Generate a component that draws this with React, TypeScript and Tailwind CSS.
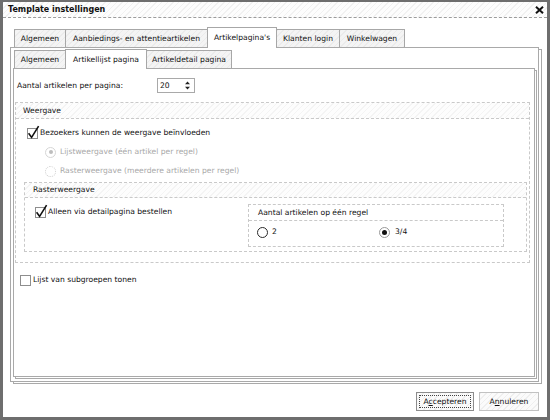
import React from "react";

function Tab({
  label,
  w,
  active = false,
  first = false,
  inner = false,
}: {
  label: string;
  w: string;
  active?: boolean;
  first?: boolean;
  inner?: boolean;
}) {
  const height = active
    ? inner
      ? "h-[20px]"
      : "h-[21px]"
    : "h-[18px] mb-px";
  return (
    <div
      className={`${w} ${height} ${first ? "" : "-ml-px"} ${
        active
          ? "bg-white relative z-10"
          : "bg-[image:repeating-linear-gradient(135deg,#ebebeb_0px,#ebebeb_1px,#f4f4f4_1px,#f4f4f4_4px)]"
      } border border-b-0 border-[#a7a7a7] flex items-center justify-center shrink-0`}
    >
      {label}
    </div>
  );
}

function Check({ checked = false }: { checked?: boolean }) {
  return (
    <span className="relative block w-[11px] h-[11px] border border-[#8e8e8e] bg-white shrink-0">
      {checked && (
        <svg
          className="absolute left-[-1px] top-[-4px]"
          width="14"
          height="14"
          viewBox="0 0 14 14"
        >
          <path
            d="M1.6 8.2 L4.6 12.4 L11.6 1.2"
            stroke="#111"
            strokeWidth="1.6"
            fill="none"
          />
        </svg>
      )}
    </span>
  );
}

function Radio({
  kind,
}: {
  kind: "disabledOn" | "disabledOff" | "off" | "on";
}) {
  if (kind === "disabledOn")
    return (
      <span className="w-[11px] h-[11px] rounded-full border border-[#d6d6d6] bg-white flex items-center justify-center shrink-0">
        <span className="w-[4px] h-[4px] rounded-full bg-[#bdbdbd]" />
      </span>
    );
  if (kind === "disabledOff")
    return (
      <span className="w-[11px] h-[11px] rounded-full border border-dotted border-[#cfcfcf] bg-white shrink-0" />
    );
  if (kind === "off")
    return (
      <span className="w-[11px] h-[11px] rounded-full border-[1.5px] border-[#2a2a2a] bg-white shrink-0" />
    );
  return (
    <span className="w-[11px] h-[11px] rounded-full border border-[#9a9a9a] bg-white flex items-center justify-center shrink-0">
      <span className="w-[5px] h-[5px] rounded-full bg-[#111]" />
    </span>
  );
}

export default function App() {
  return (
    <div className="w-[550px] h-[420px] bg-white border-[3px] border-t-2 border-[#6e6e6e] flex flex-col font-['DejaVu_Sans',sans-serif] text-[7.6px] leading-none text-[#111]">
      {/* title bar */}
      <div className="h-[16px] shrink-0 flex items-center justify-between pl-[5px] pr-[3px] border-b border-dashed border-[#9c9c9c] bg-[image:repeating-linear-gradient(135deg,#f1f1f1_0px,#f1f1f1_1px,#fdfdfd_1px,#fdfdfd_4px)]">
        <span className="font-bold text-[8px] text-[#111]">
          Template instellingen
        </span>
        <svg width="9" height="8" viewBox="0 0 9 8">
          <path
            d="M1 0.8 L8 7.2 M8 0.8 L1 7.2"
            stroke="#111"
            strokeWidth="2"
          />
        </svg>
      </div>

      <div className="flex-1 pl-[7px] pt-[9px] flex flex-col">
        {/* main tabs */}
        <div className="flex items-end h-[21px] pl-[4px] -mb-px">
          <Tab label="Algemeen" w="w-[52px]" first />
          <Tab label="Aanbiedings- en attentieartikelen" w="w-[143px]" />
          <Tab label="Artikelpagina's" w="w-[70px]" active />
          <Tab label="Klanten login" w="w-[64px]" />
          <Tab label="Winkelwagen" w="w-[66px]" />
        </div>

        {/* outer panel */}
        <div className="w-[529px] h-[335px] border border-[#a9a9a9] bg-white pl-[2px] pt-px shadow-[3px_2px_0_-1px_#fff,3px_2px_0_0_#a9a9a9]">
          <div className="flex items-end h-[20px] pl-[1px] -mb-px">
            <Tab label="Algemeen" w="w-[52px]" first inner />
            <Tab label="Artikellijst pagina" w="w-[82px]" active inner />
            <Tab label="Artikeldetail pagina" w="w-[86px]" inner />
          </div>

          {/* inner panel */}
          <div className="w-[522px] h-[309px] border border-[#a9a9a9] bg-white shadow-[2px_2px_0_-1px_#fff,2px_2px_0_0_#a9a9a9]">
            <div className="mt-[9px] h-[15px] flex items-center">
              <span className="pl-[3px] w-[143px]">
                Aantal artikelen per pagina:
              </span>
              <div className="w-[38px] h-[15px] border border-[#a9a9a9] flex items-center justify-between pl-[2px] pr-[4px]">
                <span>20</span>
                <svg width="5" height="9" viewBox="0 0 5 9">
                  <path d="M2.5 0.5 L5 3.2 L0 3.2 Z M0 5.8 L5 5.8 L2.5 8.5 Z" fill="#222" />
                </svg>
              </div>
            </div>

            {/* Weergave */}
            <div className="mt-[9px] ml-px w-[515px] h-[161px] border border-dashed border-[#c9c9c9]">
              <div className="h-[16px] pl-[7px] flex items-center border-b border-dashed border-[#c9c9c9] bg-[image:repeating-linear-gradient(135deg,#f4f4f4_0px,#f4f4f4_1px,#fdfdfd_1px,#fdfdfd_4px)]">
                Weergave
              </div>
              <div className="mt-[7px] ml-[11px] h-[14px] flex items-center gap-[2px]">
                <Check checked />
                <span>Bezoekers kunnen de weergave beïnvloeden</span>
              </div>
              <div className="mt-[5px] ml-[29px] h-[14px] flex items-center gap-[4px] text-[#a8a8a8]">
                <Radio kind="disabledOn" />
                <span>Lijstweergave (één artikel per regel)</span>
              </div>
              <div className="mt-[5px] ml-[29px] h-[14px] flex items-center gap-[4px] text-[#a8a8a8]">
                <Radio kind="disabledOff" />
                <span>Rasterweergave (meerdere artikelen per regel)</span>
              </div>

              {/* Rasterweergave */}
              <div className="mt-[4px] ml-[8px] w-[503px] h-[70px] border border-dashed border-[#c9c9c9]">
                <div className="h-[15px] pl-[8px] flex items-center border-b border-dashed border-[#c9c9c9] bg-[image:repeating-linear-gradient(135deg,#f4f4f4_0px,#f4f4f4_1px,#fdfdfd_1px,#fdfdfd_4px)]">
                  Rasterweergave
                </div>
                <div className="mt-[6px] flex items-start">
                  <div className="mt-px ml-[10px] h-[14px] flex items-center gap-[2px]">
                    <Check checked />
                    <span>Alleen via detailpagina bestellen</span>
                  </div>
                  <div className="ml-auto mr-[22px] w-[256px] h-[43px] border border-dashed border-[#c9c9c9]">
                    <div className="h-[16px] pl-[9px] flex items-center border-b border-dashed border-[#c9c9c9]">
                      Aantal artikelen op één regel
                    </div>
                    <div className="mt-[4px] ml-[8px] h-[14px] flex items-center">
                      <div className="w-[122px] flex items-center gap-[4px]">
                        <Radio kind="off" />
                        <span>2</span>
                      </div>
                      <div className="flex items-center gap-[5px]">
                        <Radio kind="on" />
                        <span>3/4</span>
                      </div>
                    </div>
                  </div>
                </div>
              </div>
            </div>

            <div className="mt-[10px] ml-[6px] h-[14px] flex items-center gap-[2px]">
              <Check />
              <span>Lijst van subgroepen tonen</span>
            </div>
          </div>
        </div>

        {/* buttons */}
        <div className="w-[529px] mt-[10px] flex justify-end gap-[5px]">
          <button className="w-[58px] h-[19px] border border-[#8c8c8c] p-[2px] bg-[image:repeating-linear-gradient(135deg,#efefef_0px,#efefef_1px,#fbfbfb_1px,#fbfbfb_4px)]">
            <span className="w-full h-full border border-dotted border-[#444] flex items-center justify-center">
              <span>
                A<span className="underline">c</span>cepteren
              </span>
            </span>
          </button>
          <button className="w-[60px] h-[19px] border border-[#c2c2c2] flex items-center justify-center bg-[image:repeating-linear-gradient(135deg,#efefef_0px,#efefef_1px,#fbfbfb_1px,#fbfbfb_4px)]">
            <span>
              A<span className="underline">n</span>nuleren
            </span>
          </button>
        </div>
      </div>
    </div>
  );
}
